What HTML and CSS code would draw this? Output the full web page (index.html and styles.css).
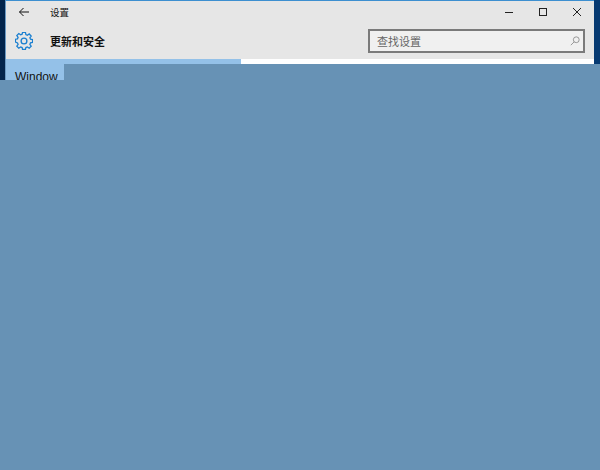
FILE: index.html
```html
<!DOCTYPE html>
<html lang="zh-CN">
<head>
<meta charset="utf-8">
<title>设置</title>
<link rel="stylesheet" href="styles.css">
</head>
<body>
<div class="desktop">
  <div class="window">
    <div class="titlebar">
      <svg class="back" width="12" height="12" viewBox="0 0 12 12"><path d="M11 6H1.500M5.500 2 1.500 6l4 4" fill="none" stroke="#111" stroke-width="1"/></svg>
      <span class="title">设置</span>
      <div class="controls">
        <svg width="10" height="10" viewBox="0 0 10 10"><path d="M1 5.500H9" stroke="#222" stroke-width="1"/></svg>
        <svg width="10" height="10" viewBox="0 0 10 10"><rect x="1.500" y="1.500" width="7" height="7" fill="none" stroke="#222" stroke-width="1"/></svg>
        <svg width="10" height="10" viewBox="0 0 10 10"><path d="M1 1l8 8M9 1l-8 8" stroke="#222" stroke-width="1"/></svg>
      </div>
    </div>
    <div class="header">
      <svg class="gear" width="18" height="18" viewBox="0 0 20 20"><path d="M8.300 1h3.400l.5 2.600 1.700.7 2.200-1.500 2.300 2.400-1.500 2.100.7 1.700 2.400.5v3.300l-2.400.5-.7 1.700 1.500 2.100-2.300 2.400-2.200-1.500-1.700.7-.5 2.200H8.300l-.5-2.200-1.700-.7-2.200 1.500-2.300-2.400 1.500-2.100-.7-1.700L0 12.300V9l2.400-.5.700-1.700L1.600 4.700l2.300-2.400 2.200 1.500 1.700-.7z" transform="translate(.5 -.5) scale(.95)" fill="none" stroke="#1a7fd0" stroke-width="1.500"/><circle cx="10" cy="10" r="3.200" fill="none" stroke="#1a7fd0" stroke-width="1.500"/></svg>
      <span class="heading">更新和安全</span>
      <div class="search">
        <span class="placeholder">查找设置</span>
        <svg width="10" height="10" viewBox="0 0 12 12"><circle cx="7.500" cy="4.500" r="3.500" fill="none" stroke="#888" stroke-width="1"/><path d="M5 7 1 11" stroke="#888" stroke-width="1"/></svg>
      </div>
    </div>
    <div class="content">
      <div class="sidebar"><span class="nav-item">Window</span></div>
      <div class="main"></div>
    </div>
    <div class="cover-notch"></div>
    <div class="cover"></div>
  </div>
</div>
</body>
</html>
```
FILE: styles.css
```css
html, body {
  margin: 0;
  padding: 0;
}
body {
  width: 600px;
  height: 470px;
  overflow: hidden;
  font-family: "Liberation Sans", "Noto Sans CJK SC", sans-serif;
}
.desktop {
  width: 600px;
  height: 470px;
  background: linear-gradient(90deg, #02244c 0, #02244c 300px, #073a72 300px, #073a72 600px);
  overflow: hidden;
}
.window {
  margin: 0 6px 0 5px;
  height: 469px;
  border-top: 1px solid #3d8fd0;
  border-left: 1px solid #6b9ac4;
  background: #fff;
  display: flex;
  flex-direction: column;
}
.titlebar {
  height: 22px;
  flex: none;
  display: flex;
  align-items: center;
  background: #e6e6e6;
  padding-left: 12px;
}
.title {
  margin-left: 20px;
  font-size: 9.500px;
  color: #111;
}
.controls {
  margin-left: auto;
  display: flex;
  gap: 24px;
  padding-right: 12px;
}
.header {
  height: 36px;
  flex: none;
  display: flex;
  align-items: center;
  background: #e6e6e6;
  padding-left: 9px;
}
.heading {
  margin-left: 17px;
  font-size: 11px;
  font-weight: 700;
  color: #111;
}
.search {
  margin-left: auto;
  margin-right: 9px;
  width: 217px;
  height: 24px;
  box-sizing: border-box;
  border: 2px solid #7a7a7a;
  background: #f0f0f0;
  display: flex;
  align-items: center;
  justify-content: space-between;
  padding: 0 3px 0 7px;
}
.placeholder {
  font-size: 11px;
  color: #666;
}
.content {
  flex: 1;
  display: flex;
}
.sidebar {
  width: 235px;
  background: #94c1e8;
  padding: 11px 0 0 9px;
  box-sizing: border-box;
  font-size: 12px;
  color: #111;
}
.main {
  flex: 1;
  background: #fff;
}
.cover-notch {
  position: absolute;
  left: 64px;
  top: 64px;
  width: 536px;
  height: 16px;
  background: #6792b5;
}
.cover {
  position: absolute;
  left: 0;
  top: 80px;
  width: 600px;
  height: 390px;
  background: #6792b5;
}
```
